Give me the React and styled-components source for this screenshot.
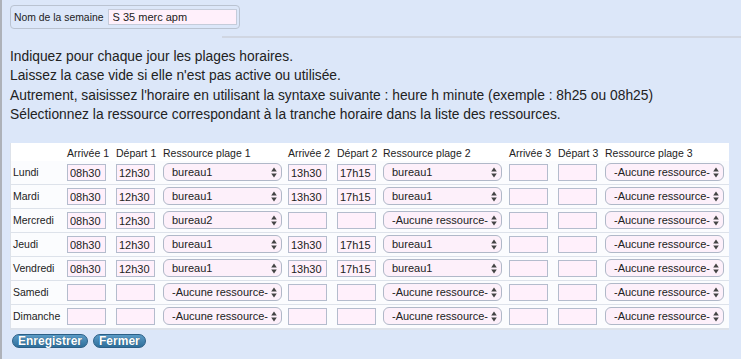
import styled, { createGlobalStyle } from "styled-components";

const GlobalStyle = createGlobalStyle`
  html, body {
    margin: 0;
    padding: 0;
    background: #dce7f9;
  }
  body {
    font-family: "Liberation Sans", Arial, Helvetica, sans-serif;
    color: #222;
  }
`;

const Page = styled.div`
  min-height: 359px;
  box-sizing: border-box;
  border-left: 2px solid #aeb2b9;
  padding: 5px 12px 0 8px;
`;

const Fieldset = styled.div`
  width: 230px;
  height: 24px;
  box-sizing: border-box;
  border: 1px solid #bac3d1;
  border-radius: 4px;
  display: flex;
  align-items: center;
  padding: 0 2px 0 3px;
  gap: 4px;
  font-size: 10.4px;
`;

const FieldLabel = styled.span`
  white-space: nowrap;
  flex-shrink: 0;
`;

const NameInput = styled.input`
  flex: 1;
  min-width: 0;
  height: 16px;
  box-sizing: border-box;
  border: 1px solid #c5ccda;
  background: #fff0fb;
  font-family: inherit;
  font-size: 11px;
  color: #222;
  padding: 0 4px;
  outline: none;
`;

const Rule = styled.div`
  margin: 7px -12px 0 212px;
  height: 2px;
  background: #d0d6e2;
`;

const Help = styled.div`
  margin-top: 9px;
  font-size: 13.8px;
  line-height: 19.4px;
  color: #222;
  white-space: nowrap;
`;

const Table = styled.div`
  margin-top: 18px;
  width: 719px;
  box-sizing: border-box;
  background: #fcfdff;
  border: 1px solid #dde2ea;
  border-right: none;
  border-top: none;
`;

const Row = styled.div`
  display: grid;
  grid-template-columns: 54px 49px 47px 125px 49px 46px 126px 49px 47px 119px;
  align-items: center;
  height: ${(p) => (p.$head ? "18px" : "24px")};
  padding-left: 2px;
  box-sizing: border-box;
  border-bottom: ${(p) => (p.$head ? "none" : "1px solid #dde2ea")};
  background: ${(p) => (p.$head ? "#ffffff" : "#fbfcfe")};
`;

const HeadCell = styled.div`
  font-size: 10.5px;
  white-space: nowrap;
  padding-top: 2px;
`;

const Day = styled.div`
  font-size: 10.5px;
  white-space: nowrap;
`;

const TimeInput = styled.input`
  width: 39px;
  height: 17px;
  box-sizing: border-box;
  border: 1px solid #b4bccd;
  background: #fff0fb;
  font-family: inherit;
  font-size: 11px;
  color: #222;
  padding: 0 2px;
  outline: none;
`;

const SelectBox = styled.div`
  width: 119px;
  height: 18px;
  box-sizing: border-box;
  border: 1px solid #b0b8c8;
  border-radius: 6px;
  background: #fdf0fa;
  display: flex;
  align-items: center;
  gap: 2px;
  padding: 0 4px 0 8px;
  font-size: 11px;
  white-space: nowrap;
`;

const SelectText = styled.span`
  flex: 1;
  overflow: hidden;
`;

const Buttons = styled.div`
  display: flex;
  gap: 5px;
  margin-top: 4px;
  padding-left: 2px;
`;

const Button = styled.button`
  height: 14px;
  padding: 0 5px;
  border: 1px solid #2b5f86;
  border-radius: 7px;
  background: linear-gradient(#5b9bc6, #2f6f9b);
  color: #fff;
  font-family: inherit;
  font-weight: bold;
  font-size: 12px;
  line-height: 12px;
  text-shadow: 0 0 1px #1d4a6a;
  cursor: pointer;
`;

const Arrows = () => (
  <svg width="6" height="11" viewBox="0 0 6 11">
    <path d="M3 0.5 L5.8 4.5 H0.2 Z" fill="#444" />
    <path d="M3 10.5 L5.8 6.5 H0.2 Z" fill="#444" />
  </svg>
);

const Select = ({ value }) => (
  <SelectBox>
    <SelectText>{value}</SelectText>
    <Arrows />
  </SelectBox>
);

const NONE = "-Aucune ressource-";

const days = [
  { name: "Lundi", slots: [["08h30", "12h30", "bureau1"], ["13h30", "17h15", "bureau1"], ["", "", NONE]] },
  { name: "Mardi", slots: [["08h30", "12h30", "bureau1"], ["13h30", "17h15", "bureau1"], ["", "", NONE]] },
  { name: "Mercredi", slots: [["08h30", "12h30", "bureau2"], ["", "", NONE], ["", "", NONE]] },
  { name: "Jeudi", slots: [["08h30", "12h30", "bureau1"], ["13h30", "17h15", "bureau1"], ["", "", NONE]] },
  { name: "Vendredi", slots: [["08h30", "12h30", "bureau1"], ["13h30", "17h15", "bureau1"], ["", "", NONE]] },
  { name: "Samedi", slots: [["", "", NONE], ["", "", NONE], ["", "", NONE]] },
  { name: "Dimanche", slots: [["", "", NONE], ["", "", NONE], ["", "", NONE]] },
];

export default function App() {
  return (
    <>
      <GlobalStyle />
      <Page>
        <Fieldset>
          <FieldLabel>Nom de la semaine</FieldLabel>
          <NameInput defaultValue="S 35 merc apm" readOnly />
        </Fieldset>
        <Rule />
        <Help>
          <div>Indiquez pour chaque jour les plages horaires.</div>
          <div>Laissez la case vide si elle n'est pas active ou utilisée.</div>
          <div>
            Autrement, saisissez l'horaire en utilisant la syntaxe suivante : heure h minute (exemple : 8h25 ou 08h25)
          </div>
          <div>Sélectionnez la ressource correspondant à la tranche horaire dans la liste des ressources.</div>
        </Help>
        <Table>
          <Row $head>
            <HeadCell />
            {[1, 2, 3].map((n) => [
              <HeadCell key={"a" + n}>Arrivée {n}</HeadCell>,
              <HeadCell key={"d" + n}>Départ {n}</HeadCell>,
              <HeadCell key={"r" + n}>Ressource plage {n}</HeadCell>,
            ])}
          </Row>
          {days.map((d) => (
            <Row key={d.name}>
              <Day>{d.name}</Day>
              {d.slots.map((s, i) => [
                <div key={"a" + i}>
                  <TimeInput defaultValue={s[0]} readOnly />
                </div>,
                <div key={"d" + i}>
                  <TimeInput defaultValue={s[1]} readOnly />
                </div>,
                <div key={"r" + i}>
                  <Select value={s[2]} />
                </div>,
              ])}
            </Row>
          ))}
        </Table>
        <Buttons>
          <Button>Enregistrer</Button>
          <Button>Fermer</Button>
        </Buttons>
      </Page>
    </>
  );
}
